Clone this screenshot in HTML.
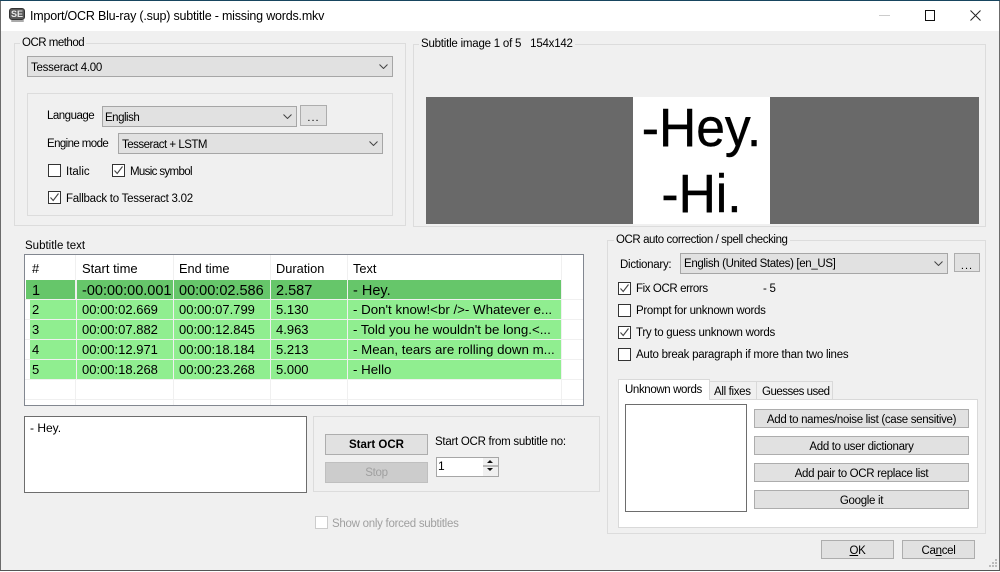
<!DOCTYPE html>
<html><head><meta charset="utf-8">
<style>
html,body{margin:0;padding:0;width:1000px;height:572px;overflow:hidden;background:#fff}
body{position:relative;font-family:"Liberation Sans",sans-serif;font-size:11.5px;letter-spacing:-.27px;color:#000}
div,span.t{position:absolute;box-sizing:border-box}
.t{white-space:nowrap;line-height:14px;position:absolute}
.g{border:1px solid #dcdcdc}
.b{background:#e1e1e1;border:1px solid #adadad;text-align:center;line-height:20px;white-space:nowrap;letter-spacing:-.32px}
.s{background:#e1e1e1;border:1px solid #a6a6a6;line-height:18px;white-space:nowrap;padding-left:3px}
.s svg{position:absolute;right:4px;top:6px}
.c{width:13px;height:13px;background:#fff;border:1px solid #333}
.c svg{position:absolute;left:0;top:0}
.lg{background:#f0f0f0;padding:0 2px}
.h{font-size:12.8px;letter-spacing:0}
.a{font-size:14.5px;letter-spacing:0}
.n{font-size:13px;letter-spacing:0}
.x{font-size:13.3px;letter-spacing:0}
.d{letter-spacing:1px;line-height:24px;font-size:11px}
</style></head><body>
<svg width="0" height="0" style="position:absolute"><defs>
<symbol id="ch" viewBox="0 0 9 5"><path d="M.5.5 4.5 4.5 8.5.5" fill="none" stroke="#444" stroke-width="1"/></symbol>
<symbol id="ck" viewBox="0 0 11 11"><path d="M1.5 5.5 4.2 8.5 9.5 1.5" fill="none" stroke="#444" stroke-width="1.1"/></symbol>
</defs></svg>

<!-- window -->
<div style="left:0;top:0;width:1000px;height:1px;background:#17455f"></div>
<div style="left:0;top:1px;width:1000px;height:30px;background:#fff"></div>
<div style="left:0;top:31px;width:999px;height:539px;background:#f0f0f0"></div>
<div style="left:0;top:1px;width:1px;height:570px;background:#6b6b6b"></div>
<div style="left:999px;top:1px;width:1px;height:570px;background:#6b6b6b"></div>
<div style="left:0;top:570px;width:1000px;height:1px;background:#555"></div>

<!-- title bar -->
<div style="left:9px;top:8px;width:16px;height:12px;background:#5a5a5a;border:1px solid #333;border-radius:3px;color:#e8e8e8;font-size:9px;font-weight:bold;line-height:10px;text-align:center;letter-spacing:0">SE</div>
<div style="left:11px;top:20px;width:13px;height:2px;background:#aaa;border-radius:1px"></div>
<span class="t" style="left:30px;top:9px;font-size:12.5px;letter-spacing:-.2px">Import/OCR Blu-ray (.sup) subtitle - missing words.mkv</span>
<div style="left:879px;top:15px;width:11px;height:1px;background:#ccc"></div>
<div style="left:925px;top:10px;width:10px;height:11px;border:1px solid #111"></div>
<svg style="position:absolute;left:970px;top:10px" width="11" height="11"><path d="M.5.5 10.5 10.5M10.5.5.5 10.5" stroke="#222" stroke-width="1" fill="none"/></svg>

<!-- OCR method -->
<div class="g" style="left:14px;top:43px;width:392px;height:183px"></div>
<span class="t lg" style="left:20px;top:36px;letter-spacing:-.5px;line-height:15px">OCR method</span>
<div class="s" style="left:27px;top:56px;width:366px;height:21px;line-height:20px;padding-top:1px">Tesseract 4.00<svg width="9" height="5" style="top:7px"><use href="#ch"/></svg></div>
<div class="g" style="left:27px;top:93px;width:366px;height:123px"></div>
<span class="t" style="left:47px;top:109px;letter-spacing:-.5px">Language</span>
<div class="s" style="left:102px;top:106px;width:195px;height:21px;line-height:20px;letter-spacing:-.5px;padding-top:1px;padding-left:2px">English<svg width="9" height="5" style="top:7px"><use href="#ch"/></svg></div>
<div class="b d" style="left:300px;top:105px;width:27px;height:21px">...</div>
<span class="t" style="left:47px;top:137px;letter-spacing:-.6px">Engine mode</span>
<div class="s" style="left:118px;top:133px;width:265px;height:21px;line-height:20px;letter-spacing:-.5px;padding-top:1px">Tesseract + LSTM<svg width="9" height="5" style="top:7px"><use href="#ch"/></svg></div>
<div class="c" style="left:48px;top:164px"></div>
<span class="t" style="left:66px;top:165px;letter-spacing:0">Italic</span>
<div class="c" style="left:112px;top:164px"><svg width="11" height="11"><use href="#ck"/></svg></div>
<span class="t" style="left:130px;top:165px;letter-spacing:-.65px">Music symbol</span>
<div class="c" style="left:48px;top:191px"><svg width="11" height="11"><use href="#ck"/></svg></div>
<span class="t" style="left:66px;top:192px;letter-spacing:-.25px">Fallback to Tesseract 3.02</span>

<!-- Subtitle image -->
<div class="g" style="left:413px;top:44px;width:573px;height:183px"></div>
<span class="t lg" style="left:419px;top:37px;line-height:15px;letter-spacing:-.22px">Subtitle image 1 of 5&nbsp;&nbsp; 154x142</span>
<div style="left:426px;top:97px;width:553px;height:127px;background:#696969"></div>
<div style="left:633px;top:97px;width:137px;height:127px;background:#fff;overflow:hidden">
<span class="t" style="left:0;width:137px;text-align:center;top:3px;font-size:54px;line-height:56px;letter-spacing:0;transform:scaleX(.955);-webkit-text-stroke:.4px #000">-Hey.</span>
<span class="t" style="left:0;width:137px;text-align:center;top:69px;font-size:54px;line-height:56px;letter-spacing:0;transform:scaleX(.955);-webkit-text-stroke:.4px #000">-Hi.</span>
</div>

<!-- Subtitle text -->
<span class="t" style="left:25px;top:239px;letter-spacing:0">Subtitle text</span>
<div style="left:24px;top:254px;width:560px;height:152px;background:#fff;border:1px solid #828790"></div>
<div style="left:75px;top:255px;width:1px;height:150px;background:#f0f0f0"></div>
<div style="left:173px;top:255px;width:1px;height:150px;background:#f0f0f0"></div>
<div style="left:270px;top:255px;width:1px;height:150px;background:#f0f0f0"></div>
<div style="left:347px;top:255px;width:1px;height:150px;background:#f0f0f0"></div>
<div style="left:561px;top:255px;width:1px;height:150px;background:#f0f0f0"></div>
<div style="left:25px;top:299px;width:558px;height:1px;background:#f0f0f0"></div>
<div style="left:25px;top:319px;width:558px;height:1px;background:#f0f0f0"></div>
<div style="left:25px;top:339px;width:558px;height:1px;background:#f0f0f0"></div>
<div style="left:25px;top:359px;width:558px;height:1px;background:#f0f0f0"></div>
<div style="left:25px;top:379px;width:558px;height:1px;background:#f0f0f0"></div>
<div style="left:25px;top:399px;width:558px;height:1px;background:#f0f0f0"></div>
<span class="t h" style="left:32px;top:262px">#</span>
<span class="t h" style="left:82px;top:262px;font-size:13px">Start time</span>
<span class="t h" style="left:179px;top:262px">End time</span>
<span class="t h" style="left:276px;top:262px">Duration</span>
<span class="t h" style="left:353px;top:262px">Text</span>

<div style="left:26px;top:280px;width:535px;height:19px;background:#66c66a"></div>
<div style="left:75px;top:280px;width:2px;height:19px;background:#f0f0f0"></div>
<div style="left:173px;top:280px;width:1px;height:19px;background:#f0f0f0"></div>
<div style="left:270px;top:280px;width:1px;height:19px;background:#f0f0f0"></div>
<div style="left:347px;top:280px;width:1px;height:19px;background:#f0f0f0"></div>
<span class="t a" style="left:32px;top:284px">1</span>
<span class="t a" style="left:82px;top:284px">-00:00:00.001</span>
<span class="t a" style="left:179px;top:284px">00:00:02.586</span>
<span class="t a" style="left:276px;top:284px">2.587</span>
<span class="t a" style="left:353px;top:284px">- Hey.</span>

<div style="left:30px;top:300px;width:531px;height:19px;background:#90ee90"></div>
<div style="left:30px;top:320px;width:531px;height:19px;background:#90ee90"></div>
<div style="left:30px;top:340px;width:531px;height:19px;background:#90ee90"></div>
<div style="left:30px;top:360px;width:531px;height:19px;background:#90ee90"></div>
<div style="left:76px;top:300px;width:1px;height:79px;background:#f0f0f0"></div>
<div style="left:173px;top:300px;width:1px;height:79px;background:#f0f0f0"></div>
<div style="left:270px;top:300px;width:1px;height:79px;background:#f0f0f0"></div>
<div style="left:347px;top:300px;width:1px;height:79px;background:#f0f0f0"></div>

<span class="t n" style="left:32px;top:303px">2</span><span class="t n" style="left:82px;top:303px">00:00:02.669</span><span class="t n" style="left:179px;top:303px">00:00:07.799</span><span class="t n" style="left:276px;top:303px">5.130</span><span class="t x" style="left:353px;top:303px">- Don't know!&lt;br /&gt;- Whatever e...</span>
<span class="t n" style="left:32px;top:323px">3</span><span class="t n" style="left:82px;top:323px">00:00:07.882</span><span class="t n" style="left:179px;top:323px">00:00:12.845</span><span class="t n" style="left:276px;top:323px">4.963</span><span class="t x" style="left:353px;top:323px">- Told you he wouldn't be long.&lt;...</span>
<span class="t n" style="left:32px;top:343px">4</span><span class="t n" style="left:82px;top:343px">00:00:12.971</span><span class="t n" style="left:179px;top:343px">00:00:18.184</span><span class="t n" style="left:276px;top:343px">5.213</span><span class="t x" style="left:353px;top:343px">- Mean, tears are rolling down m...</span>
<span class="t n" style="left:32px;top:363px">5</span><span class="t n" style="left:82px;top:363px">00:00:18.268</span><span class="t n" style="left:179px;top:363px">00:00:23.268</span><span class="t n" style="left:276px;top:363px">5.000</span><span class="t x" style="left:353px;top:363px">- Hello</span>

<!-- text box -->
<div style="left:24px;top:416px;width:283px;height:77px;background:#fff;border:1px solid #6d6d6d"></div>
<span class="t" style="left:30px;top:421px;font-size:12px;letter-spacing:0">- Hey.</span>

<!-- start panel -->
<div class="g" style="left:313px;top:416px;width:287px;height:76px"></div>
<div class="b" style="left:325px;top:434px;width:103px;height:21px;font-weight:bold;letter-spacing:0">Start OCR</div>
<div class="b" style="left:325px;top:462px;width:103px;height:21px;background:#ccc;border-color:#bfbfbf;color:#a0a0a0">Stop</div>
<span class="t" style="left:435px;top:435px">Start OCR from subtitle no:</span>
<div style="left:436px;top:457px;width:63px;height:20px;background:#fff;border:1px solid #a6a6a6"></div>
<span class="t" style="left:438px;top:459px;font-size:12px;letter-spacing:0">1</span>
<div style="left:483px;top:458px;width:15px;height:18px;background:#f0f0f0"></div>
<div style="left:483px;top:465px;width:15px;height:2px;background:#b8b8b8"></div>
<svg style="position:absolute;left:486px;top:459px" width="8" height="14"><path d="M4 1 7 4H1zM1 9H7L4 12z" fill="#111"/></svg>

<div style="left:315px;top:516px;width:13px;height:13px;background:#fff;border:1px solid #ccc"></div>
<span class="t" style="left:332px;top:517px;color:#a0a0a0">Show only forced subtitles</span>

<!-- right group -->
<div class="g" style="left:607px;top:240px;width:379px;height:294px"></div>
<span class="t lg" style="left:614px;top:233px;letter-spacing:-.42px;line-height:15px">OCR auto correction / spell checking</span>
<span class="t" style="left:620px;top:258px">Dictionary:</span>
<div class="s" style="left:680px;top:253px;width:268px;height:21px;line-height:20px;letter-spacing:-.35px">English (United States) [en_US]<svg width="9" height="5" style="top:7px"><use href="#ch"/></svg></div>
<div class="b d" style="left:954px;top:253px;width:26px;height:19px">...</div>
<div class="c" style="left:618px;top:282px"><svg width="11" height="11"><use href="#ck"/></svg></div>
<span class="t" style="left:636px;top:282px;letter-spacing:-.4px">Fix OCR errors</span>
<span class="t" style="left:763px;top:282px">- 5</span>
<div class="c" style="left:618px;top:304px"></div>
<span class="t" style="left:636px;top:304px;letter-spacing:-.3px">Prompt for unknown words</span>
<div class="c" style="left:618px;top:326px"><svg width="11" height="11"><use href="#ck"/></svg></div>
<span class="t" style="left:636px;top:326px">Try to guess unknown words</span>
<div class="c" style="left:618px;top:348px"></div>
<span class="t" style="left:636px;top:348px;letter-spacing:-.25px">Auto break paragraph if more than two lines</span>

<!-- tabs -->
<div style="left:709px;top:381px;width:48px;height:19px;background:#f0f0f0;border:1px solid #d9d9d9"></div>
<div style="left:756px;top:381px;width:77px;height:19px;background:#f0f0f0;border:1px solid #d9d9d9"></div>
<div style="left:618px;top:399px;width:360px;height:129px;background:#fff;border:1px solid #d9d9d9"></div>
<div style="left:618px;top:379px;width:92px;height:21px;background:#fff;border:1px solid #d9d9d9;border-bottom:0"></div>
<span class="t" style="left:625px;top:383px;letter-spacing:-.38px">Unknown words</span>
<span class="t" style="left:714px;top:385px;letter-spacing:-.33px">All fixes</span>
<span class="t" style="left:762px;top:385px;letter-spacing:-.5px">Guesses used</span>
<div style="left:625px;top:404px;width:122px;height:108px;background:#fff;border:1px solid #6d6d6d"></div>
<div class="b" style="left:754px;top:409px;width:215px;height:19px">Add to names/noise list (case sensitive)</div>
<div class="b" style="left:754px;top:436px;width:215px;height:19px">Add to user dictionary</div>
<div class="b" style="left:754px;top:463px;width:215px;height:19px">Add pair to OCR replace list</div>
<div class="b" style="left:754px;top:490px;width:215px;height:19px">Google it</div>

<div class="b" style="left:821px;top:540px;width:73px;height:19px"><u>O</u>K</div>
<div class="b" style="left:902px;top:540px;width:73px;height:19px">Ca<u>n</u>cel</div>
<svg style="position:absolute;left:987px;top:559px" width="11" height="10"><path d="M8 0h2v2H8zM5 3h2v2H5zM8 3h2v2H8zM2 6h2v2H2zM5 6h2v2H5zM8 6h2v2H8z" fill="#bbb"/></svg>
</body></html>
